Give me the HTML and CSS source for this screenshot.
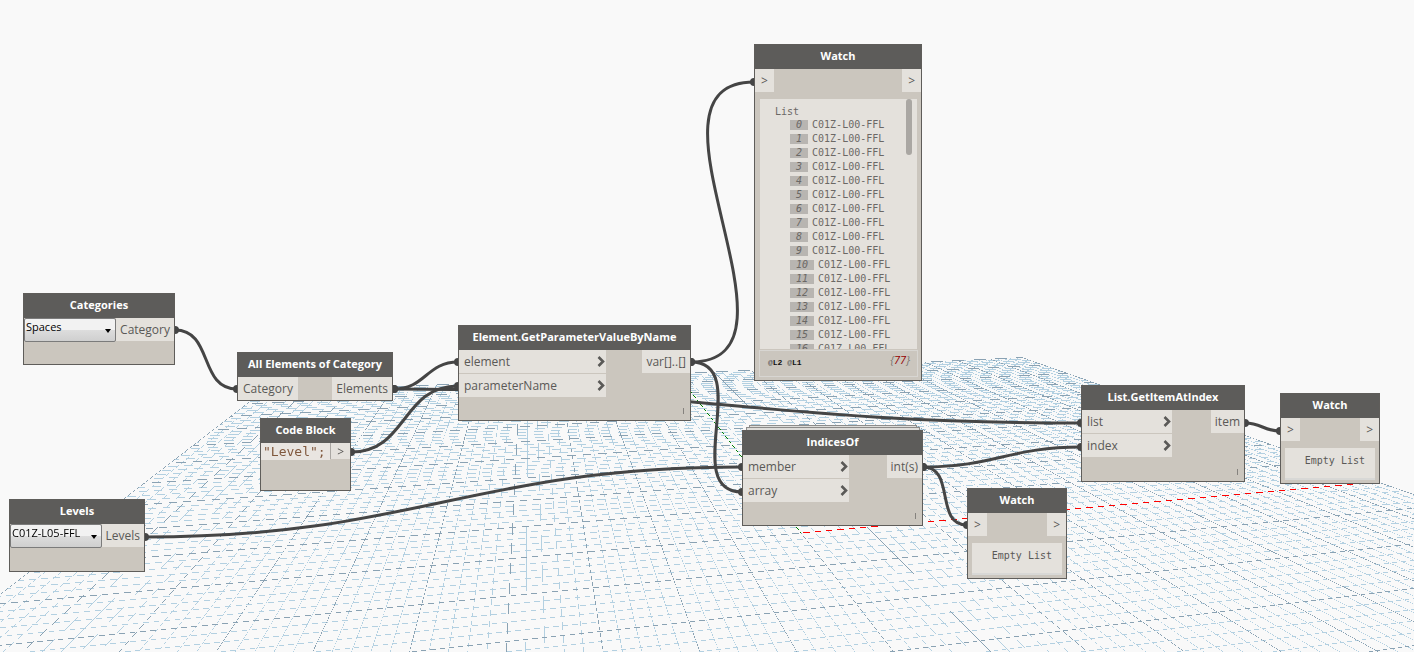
FILE: index.html
```
<!DOCTYPE html>
<html lang="en">
<head>
    <meta charset="UTF-8">
    <meta name="viewport" content="width=device-width, initial-scale=1.0">
    <title>Dynamo - Workspace</title>
    <link rel="stylesheet" href="styles.css">
</head>
<body>
    <main class="workspace">
        <canvas class="layer" id="grid" aria-hidden="true"></canvas>
        <svg class="layer wires" id="wires" aria-hidden="true"></svg>

        <section class="node categories">
            <h2>Categories</h2>
            <div class="ports">
                <div class="dropdown">
                    <select aria-label="Category"><option>Spaces</option></select>
                </div>
                <div class="port out">Category</div>
            </div>
        </section>

        <section class="node all-elements">
            <h2>All Elements of Category</h2>
            <div class="ports">
                <div class="port">Category</div>
                <div class="port out">Elements</div>
            </div>
        </section>

        <section class="node code-block">
            <h2>Code Block</h2>
            <div class="ports">
                <input class="code" type="text" value="&quot;Level&quot;;" aria-label="Code">
                <div class="port out arrow">&gt;</div>
            </div>
        </section>

        <section class="node levels">
            <h2>Levels</h2>
            <div class="ports">
                <div class="dropdown">
                    <select aria-label="Level"><option>C01Z-L05-FFL</option></select>
                </div>
                <div class="port out">Levels</div>
            </div>
        </section>

        <section class="node get-parameter">
            <h2>Element.GetParameterValueByName</h2>
            <div class="ports">
                <div class="inputs">
                    <div class="port">element <svg class="chevron" viewBox="0 0 9 11"><path d="M1.5 1 6 5.5 1.5 10"/></svg></div>
                    <div class="port">parameterName <svg class="chevron" viewBox="0 0 9 11"><path d="M1.5 1 6 5.5 1.5 10"/></svg></div>
                </div>
                <div class="port out">var[]..[]</div>
            </div>
            <i class="lacing"></i>
        </section>

        <section class="node watch watch-list">
            <h2>Watch</h2>
            <div class="ports">
                <div class="port arrow">&gt;</div>
                <div class="port out arrow">&gt;</div>
            </div>
            <div class="tree">
                <div class="tree-title">List</div>
                <ul>
                    <li><em>0</em>C01Z-L00-FFL</li>
                    <li><em>1</em>C01Z-L00-FFL</li>
                    <li><em>2</em>C01Z-L00-FFL</li>
                    <li><em>3</em>C01Z-L00-FFL</li>
                    <li><em>4</em>C01Z-L00-FFL</li>
                    <li><em>5</em>C01Z-L00-FFL</li>
                    <li><em>6</em>C01Z-L00-FFL</li>
                    <li><em>7</em>C01Z-L00-FFL</li>
                    <li><em>8</em>C01Z-L00-FFL</li>
                    <li><em>9</em>C01Z-L00-FFL</li>
                    <li><em>10</em>C01Z-L00-FFL</li>
                    <li><em>11</em>C01Z-L00-FFL</li>
                    <li><em>12</em>C01Z-L00-FFL</li>
                    <li><em>13</em>C01Z-L00-FFL</li>
                    <li><em>14</em>C01Z-L00-FFL</li>
                    <li><em>15</em>C01Z-L00-FFL</li>
                    <li><em>16</em>C01Z-L00-FFL</li>
                </ul>
                <span class="thumb"></span>
            </div>
            <div class="summary">
                <span class="depth"><span>@</span>L2 <span>@</span>L1</span>
                <span class="count">{<b>77</b>}</span>
            </div>
        </section>

        <div class="stack stack-back"></div>
        <div class="stack"></div>
        <section class="node indices-of">
            <h2>IndicesOf</h2>
            <div class="ports">
                <div class="inputs">
                    <div class="port">member <svg class="chevron" viewBox="0 0 9 11"><path d="M1.5 1 6 5.5 1.5 10"/></svg></div>
                    <div class="port">array <svg class="chevron" viewBox="0 0 9 11"><path d="M1.5 1 6 5.5 1.5 10"/></svg></div>
                </div>
                <div class="port out">int(s)</div>
            </div>
            <i class="lacing"></i>
        </section>

        <section class="node watch watch-indices">
            <h2>Watch</h2>
            <div class="ports">
                <div class="port arrow">&gt;</div>
                <div class="port out arrow">&gt;</div>
            </div>
            <div class="empty">Empty List</div>
        </section>

        <section class="node get-item">
            <h2>List.GetItemAtIndex</h2>
            <div class="ports">
                <div class="inputs">
                    <div class="port">list <svg class="chevron" viewBox="0 0 9 11"><path d="M1.5 1 6 5.5 1.5 10"/></svg></div>
                    <div class="port">index <svg class="chevron" viewBox="0 0 9 11"><path d="M1.5 1 6 5.5 1.5 10"/></svg></div>
                </div>
                <div class="port out">item</div>
            </div>
            <i class="lacing"></i>
        </section>

        <section class="node watch watch-item">
            <h2>Watch</h2>
            <div class="ports">
                <div class="port arrow">&gt;</div>
                <div class="port out arrow">&gt;</div>
            </div>
            <div class="empty">Empty List</div>
        </section>
    </main>

    <script src="workspace.js"></script>
</body>
</html>
```
FILE: styles.css
```
* {
    box-sizing: border-box;
}

body {
    margin: 0;
    background-color: #f9f9f9;
    font-family: "Open Sans", "Noto Sans", sans-serif;
    font-size: 12px;
    color: #5a5957;
}

.workspace {
    position: relative;
    min-height: 100vh;
    overflow: hidden;
}

.layer {
    position: absolute;
    top: 0;
    left: 0;
    width: 100%;
    height: 100%;
}

.wires path {
    fill: none;
    stroke: #454545;
    stroke-width: 3;
}

.wires circle {
    fill: #454545;
}

/* nodes */
.node {
    position: absolute;
    background-color: #cbc6be;
    border: 1px solid #5f5d5a;
}

.node h2 {
    margin: 0;
    height: 24px;
    line-height: 21px;
    font-size: 11px;
    font-weight: 700;
    text-align: center;
    white-space: nowrap;
    color: #fff;
    background-color: #5d5c5a;
}

.ports {
    display: flex;
    align-items: flex-start;
}

.inputs {
    display: flex;
    flex-direction: column;
    gap: 1px;
}

.port {
    display: flex;
    align-items: center;
    justify-content: space-between;
    height: 23px;
    padding: 0 5px 1px;
    white-space: nowrap;
    background-color: #e4e1dc;
}

.port.out {
    margin-left: auto;
    padding: 0 4px 1px;
}

.port.arrow {
    padding: 0 6px;
}

.inputs .port {
    padding-right: 0;
}

.chevron {
    width: 9px;
    height: 11px;
    fill: none;
    stroke: #5a5957;
    stroke-width: 2.6;
}

.lacing {
    position: absolute;
    right: 6px;
    bottom: 6px;
    width: 1px;
    height: 6px;
    background-color: #85827e;
}

.dropdown {
    position: relative;
    width: 92px;
}

.dropdown::after {
    content: "";
    position: absolute;
    right: 5px;
    top: 11px;
    border: 3px solid transparent;
    border-top: 4px solid #000;
    border-bottom: 0;
}

.dropdown select {
    appearance: none;
    display: block;
    width: 100%;
    height: 24px;
    padding: 0 1px 7px;
    border: 1px solid #7b7b7b;
    border-radius: 2px;
    background-image: linear-gradient(#f2f2f2 50%, #dddddd 50%, #cfcfcf);
    font-family: inherit;
    font-size: 11px;
    color: #000;
}

.categories {
    left: 23px;
    top: 293px;
    width: 152px;
    height: 72px;
}

.all-elements {
    left: 237px;
    top: 352px;
    width: 156px;
    height: 49px;
}

.code-block {
    left: 260px;
    top: 418px;
    width: 91px;
    height: 73px;
}

.code-block .port {
    height: 16px;
    border-left: 1px solid #a9a6a2;
}

.code {
    width: 69px;
    height: 17px;
    padding: 0 2px;
    border: 0;
    background-color: #e9e5e1;
    font-family: "DejaVu Sans Mono", monospace;
    font-size: 13px;
    color: #80583d;
}

.levels {
    left: 9px;
    top: 499px;
    width: 136px;
    height: 73px;
}

.get-parameter {
    left: 458px;
    top: 325px;
    width: 233px;
    height: 96px;
}

.get-parameter .inputs {
    width: 147px;
}

.indices-of {
    left: 742px;
    top: 430px;
    width: 181px;
    height: 96px;
}

.indices-of .inputs {
    width: 106px;
}

.get-item {
    left: 1081px;
    top: 385px;
    width: 164px;
    height: 97px;
}

.get-item .inputs {
    width: 90px;
}

/* outlines behind a node that is replicated over a list */
.stack {
    position: absolute;
    left: 746px;
    top: 427px;
    width: 174px;
    height: 20px;
    border: 1px solid #8d8c8a;
    background-color: #deddda;
}

.stack-back {
    left: 749px;
    top: 425px;
    width: 168px;
}

.watch {
    width: 100px;
    height: 91px;
}

.watch-indices {
    left: 967px;
    top: 488px;
}

.watch-item {
    left: 1280px;
    top: 393px;
}

.empty {
    margin: 7px 4px 0;
    height: 32px;
    padding-right: 10px;
    border-bottom: 2px solid #d8d8d6;
    line-height: 26px;
    text-align: right;
    font-family: "DejaVu Sans Mono", monospace;
    font-size: 10px;
    background-color: #e4e1dc;
}

.watch-list {
    display: flex;
    flex-direction: column;
    left: 754px;
    top: 44px;
    width: 168px;
    height: 337px;
}

.tree {
    position: relative;
    flex: 1;
    margin: 7px 4px 0 5px;
    padding: 6px 15px 0;
    overflow: hidden;
    background-color: #e4e1dc;
    font-family: "DejaVu Sans Mono", monospace;
    font-size: 10px;
    line-height: 14px;
    color: #6b6865;
}

.tree-title {
    height: 13px;
}

.tree ul {
    margin: 0;
    padding: 0 0 0 15px;
    height: 0;
    list-style: none;
}

.tree li {
    display: flex;
    align-items: center;
    gap: 4px;
}

.tree em {
    padding: 0 6px;
    height: 10px;
    line-height: 10px;
    background-color: #b8b5b1;
}

.thumb {
    position: absolute;
    top: 0;
    right: 5px;
    width: 6px;
    height: 56px;
    border-radius: 3px;
    background-color: #aaa7a3;
}

.summary {
    display: flex;
    justify-content: space-between;
    height: 27px;
    margin: 1px 3px 3px 4px;
    padding: 0 7px 0 8px;
    border: 1px solid #d8d6d2;
}

.depth {
    font-family: "Liberation Mono", monospace;
    font-size: 8px;
    font-weight: 700;
    line-height: 24px;
    color: #111;
}

.depth span {
    font-weight: 400;
    color: #555;
}

.count {
    font-size: 11px;
    font-style: italic;
    line-height: 17px;
    color: #77736f;
}

.count b {
    font-weight: 400;
    color: #950000;
}
```
FILE: workspace.js
```
// ground plane, -100..100 on both axes, seen in perspective
const grid = document.getElementById("grid");
const ctx = grid.getContext("2d");
const depth = (x, y) => 1 + 0.1707 * x + 0.8468 * y;

function project(x, y) {
    const w = depth(x, y);
    return [(812.2 * x + 448.6 * y + 801) / w, (31.3 * x + 157 * y + 533) / w];
}

// hairline without anti-aliasing: only the pixels whose centre it covers
function hairline([x1, y1], [x2, y2]) {
    const dx = x2 - x1;
    const dy = y2 - y1;
    const flat = Math.abs(dx) > Math.abs(dy);
    const slope = flat ? dy / dx : dx / dy;
    const start = flat ? x1 : y1;
    const end = flat ? x2 : y2;
    const base = flat ? y1 : x1;
    const limit = flat ? grid.width : grid.height;
    const from = Math.max(0, Math.round(Math.min(start, end)));
    const to = Math.min(limit, Math.round(Math.max(start, end)));

    for (let p = from; p < to; p++) {
        const q = base + slope * (p + 0.5 - start);
        const cell = Math.floor(q);
        if (Math.abs(q - cell - 0.5) > 0.28) continue;
        if (flat) ctx.fillRect(p, cell, 1, 1);
        else ctx.fillRect(cell, p, 1, 1);
    }
}

function gridLine(x1, y1, x2, y2, color) {
    // cut off the part that lies behind the camera
    const near = 0.3;
    const w1 = depth(x1, y1);
    const w2 = depth(x2, y2);
    if (w1 < near && w2 < near) return;
    if (w1 < near) {
        const t = (near - w1) / (w2 - w1);
        x1 += (x2 - x1) * t;
        y1 += (y2 - y1) * t;
    }
    ctx.fillStyle = color;
    hairline(project(x1, y1), project(x2, y2));
}

function drawGrid() {
    grid.width = grid.clientWidth;
    grid.height = grid.clientHeight;
    for (const major of [false, true]) {
        for (let i = -50; i <= 50; i++) {
            if ((i % 5 === 0) !== major) continue;
            const v = i / 50;
            const color = major ? "#8aa2b3" : "#b3d0e1";
            gridLine(v, -1, v, 1, color);
            gridLine(-1, v, 1, v, color);
        }
    }
    gridLine(0, 0, 1, 0, "#ff0000");
    gridLine(0, 0, 0, 1, "#008000");
}

drawGrid();
window.addEventListener("resize", drawGrid);

// connectors between ports
const SVG_NS = "http://www.w3.org/2000/svg";
const wires = document.getElementById("wires");
const links = [
    [175, 330, 237, 389],
    [394, 389, 458, 362],
    [394, 389, 1081, 423],
    [351, 452, 458, 386],
    [691, 362, 754, 82],
    [691, 362, 742, 492],
    [145, 537, 742, 467],
    [923, 467, 1081, 447],
    [923, 467, 967, 525],
    [1245, 423, 1280, 431]
];

function add(tag, attrs) {
    const el = document.createElementNS(SVG_NS, tag);
    for (const key in attrs) el.setAttribute(key, attrs[key]);
    wires.appendChild(el);
}

for (const [x1, y1, x2, y2] of links) {
    const bend = Math.hypot(x2 - x1, y2 - y1) * 0.45;
    add("path", { d: `M${x1} ${y1} C${x1 + bend} ${y1} ${x2 - bend} ${y2} ${x2} ${y2}` });
    add("circle", { cx: x1, cy: y1, r: 4 });
    add("circle", { cx: x2, cy: y2, r: 4 });
}
```
